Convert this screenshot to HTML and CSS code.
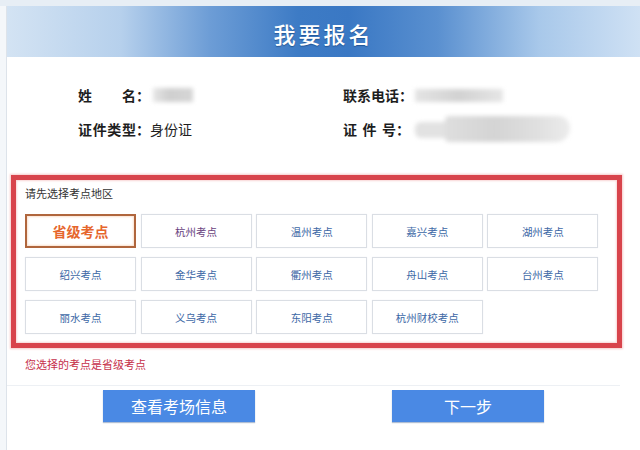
FILE: index.html
```html
<!DOCTYPE html>
<html lang="zh-CN">
<head>
<meta charset="utf-8">
<title>我要报名</title>
<link rel="stylesheet" href="styles.css">
</head>
<body>
<div class="page">
  <div class="strip"></div>
  <div class="frame">
    <header class="banner">我要报名</header>
    <div class="panel">
      <section class="info">
        <div class="field">
          <span class="label w58">姓名</span><span class="colon">：</span><span class="blur blur-name"></span>
        </div>
        <div class="field">
          <span class="label w56">联系电话</span><span class="colon">：</span><span class="blur blur-phone"></span>
        </div>
        <div class="field">
          <span class="label w58">证件类型</span><span class="colon">：</span><span class="value">身份证</span>
        </div>
        <div class="field">
          <span class="label w52">证件号</span><span class="colon">：</span><span class="blur blur-id"><span class="blur-id-a"></span><span class="blur-id-b"></span></span>
        </div>
      </section>
      <section class="select-box">
        <p class="select-title">请先选择考点地区</p>
        <div class="sites">
          <button class="site selected">省级考点</button>
          <button class="site visited">杭州考点</button>
          <button class="site">温州考点</button>
          <button class="site">嘉兴考点</button>
          <button class="site">湖州考点</button>
          <button class="site">绍兴考点</button>
          <button class="site">金华考点</button>
          <button class="site">衢州考点</button>
          <button class="site">舟山考点</button>
          <button class="site">台州考点</button>
          <button class="site">丽水考点</button>
          <button class="site">义乌考点</button>
          <button class="site">东阳考点</button>
          <button class="site">杭州财校考点</button>
        </div>
      </section>
      <p class="msg">您选择的考点是省级考点</p>
    </div>
    <div class="actions">
      <button class="action">查看考场信息</button>
      <button class="action">下一步</button>
    </div>
  </div>
</div>
</body>
</html>
```
FILE: styles.css
```css
* { box-sizing: border-box; }
html, body { margin: 0; padding: 0; }
body {
  width: 640px;
  height: 450px;
  overflow: hidden;
  background: #f4f7fa;
  font-family: "Noto Sans CJK SC", "Noto Sans", sans-serif;
  color: #222;
}
.page { width: 640px; height: 450px; }
.strip { height: 6px; background: #e7eef5; }
.frame {
  margin-left: 6px;
  border-left: 1px solid #dde3ea;
  background: #fff;
  height: 444px;
}
.banner {
  height: 51px;
  padding-top: 3px;
  line-height: 48px;
  text-align: center;
  color: #fff;
  font-size: 22px;
  font-weight: 500;
  letter-spacing: 3px;
  text-shadow: 0 1px 1px rgba(0, 40, 90, 0.45);
  background: linear-gradient(to right, #d3e3f3 0%, #b6d0ec 18%, #6d9dd6 32%, #3d7bc5 46%, #3a78c4 54%, #5a90d0 68%, #a8c8ea 84%, #cfe1f4 100%);
}
.panel {
  width: 613px;
  padding-bottom: 14px;
  border-bottom: 1px solid #edf0f4;
}
.info {
  display: grid;
  grid-template-columns: 265px auto;
  row-gap: 14px;
  padding: 28px 0 0 71px;
}
.field {
  display: flex;
  align-items: center;
  height: 20px;
  font-size: 14px;
  font-weight: bold;
  color: #1e1e1e;
}
.label {
  display: inline-block;
  text-align: justify;
  text-align-last: justify;
}
.w58 { width: 58px; }
.w56 { width: 56px; }
.w52 { width: 53px; }
.value { font-weight: normal; }
.blur {
  display: inline-block;
  background: #d9d9d9;
  filter: blur(2px);
}
.blur-name { width: 40px; height: 14px; margin-left: 3px; background: linear-gradient(to right, #e6e6e6, #cfcfcf 40%, #d6d6d6); }
.blur-phone { width: 88px; height: 13px; margin-left: 2px; background: linear-gradient(to right, #e4e4e4, #d2d2d2 50%, #dcdcdc 75%, #e6e6e6); }
.blur-id {
  position: relative;
  width: 155px;
  height: 26px;
  margin-left: 5px;
  background: transparent;
}
.blur-id-a {
  position: absolute;
  left: 0; top: 6px;
  width: 40px; height: 16px;
  background: #e2e2e2;
  border-radius: 6px;
}
.blur-id-b {
  position: absolute;
  left: 30px; top: 0;
  width: 125px; height: 26px;
  background: linear-gradient(to right, #dedede, #d4d4d4 40%, #e0e0e0 75%, #ececec);
  border-radius: 4px 12px 14px 4px;
}
.select-box {
  margin: 36px 0 0 4px;
  width: 611px;
  border: 5px solid #d8444c;
  box-shadow: 0 0 2px 1px #f6c9c9, inset 0 0 2px 1px #f8d6d6;
  padding: 6px 0 9px 9px;
}
.select-title {
  margin: 0;
  font-size: 11px;
  line-height: 14px;
  color: #333;
}
.sites {
  margin-top: 14px;
  display: grid;
  grid-template-columns: repeat(5, 111px);
  grid-auto-rows: 34px;
  column-gap: 4.6px;
  row-gap: 9px;
}
.site {
  font-family: inherit;
  font-size: 10.5px;
  color: #3d68a6;
  background: #fff;
  border: 1px solid #dadee4;
  box-shadow: 0 0 1px #eceef1;
  padding: 0;
  cursor: pointer;
}
.site.visited { color: #6a4480; }
.site.selected {
  border: 2px solid #b0663d;
  box-shadow: inset 0 0 2px 1px #fbe1cf;
  color: #e6662c;
  font-size: 14px;
  font-weight: bold;
}
.msg {
  margin: 9px 0 0 18px;
  font-size: 11px;
  line-height: 14px;
  color: #c6304a;
}
.actions {
  display: flex;
  gap: 137px;
  margin-top: 4px;
  padding-left: 96px;
}
.action {
  width: 152px;
  height: 32px;
  border: none;
  background: #4a89e4;
  color: #fff;
  font-family: inherit;
  font-size: 16px;
  padding: 0;
  box-shadow: 0 1px 1px rgba(30, 70, 130, 0.35);
  cursor: pointer;
}
```
